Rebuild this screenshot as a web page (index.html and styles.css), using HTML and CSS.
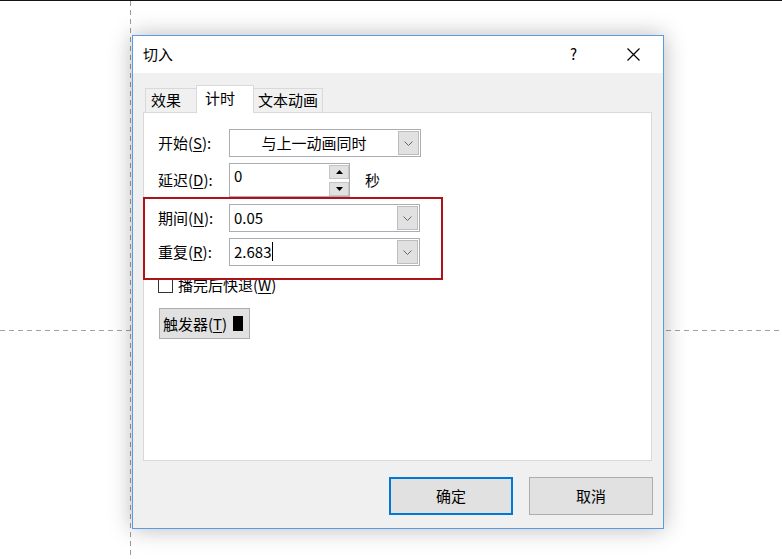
FILE: index.html
```html
<!DOCTYPE html>
<html lang="zh-CN">
<head>
    <meta charset="UTF-8">
    <title>切入</title>
    <link rel="stylesheet" href="styles.css">
</head>
<body>
    <div class="desk">
        <div class="guide-v"></div>
        <div class="guide-h"></div>

        <div class="dialog">
            <div class="titlebar">
                <span class="title">切入</span>
                <span class="help">?</span>
                <svg class="close" width="13" height="13" viewBox="0 0 13 13">
                    <path d="M0.5 0.5 L12.5 12.5 M12.5 0.5 L0.5 12.5" stroke="#000" stroke-width="1.2" fill="none"/>
                </svg>
            </div>

            <div class="content">
                <div class="tabs">
                    <div class="tab tab-first">效果</div>
                    <div class="tab active">计时</div>
                    <div class="tab">文本动画</div>
                </div>

                <div class="panel">
                    <div class="row row-start">
                        <span class="label">开始(<u>S</u>):</span>
                        <div class="combo combo-wide">
                            <span class="combo-text center">与上一动画同时</span>
                            <span class="drop"><svg width="9" height="5" viewBox="0 0 9 5"><path d="M0.5 0.5 L4.5 4.5 L8.5 0.5" stroke="#666" fill="none"/></svg></span>
                        </div>
                    </div>

                    <div class="row row-delay">
                        <span class="label">延迟(<u>D</u>):</span>
                        <div class="spinbox">
                            <span class="spin-text">0</span>
                            <div class="spins">
                                <span class="spin spin-up"><svg width="7" height="4" viewBox="0 0 7 4"><path d="M3.5 0 L7 4 L0 4 Z" fill="#000"/></svg></span>
                                <span class="spin spin-down"><svg width="7" height="4" viewBox="0 0 7 4"><path d="M0 0 L7 0 L3.5 4 Z" fill="#000"/></svg></span>
                            </div>
                        </div>
                        <span class="unit">秒</span>
                    </div>

                    <div class="row row-period">
                        <span class="label">期间(<u>N</u>):</span>
                        <div class="combo">
                            <span class="combo-text">0.05</span>
                            <span class="drop"><svg width="9" height="5" viewBox="0 0 9 5"><path d="M0.5 0.5 L4.5 4.5 L8.5 0.5" stroke="#666" fill="none"/></svg></span>
                        </div>
                    </div>

                    <div class="row row-repeat">
                        <span class="label">重复(<u>R</u>):</span>
                        <div class="combo">
                            <span class="combo-text">2.683<span class="caret"></span></span>
                            <span class="drop"><svg width="9" height="5" viewBox="0 0 9 5"><path d="M0.5 0.5 L4.5 4.5 L8.5 0.5" stroke="#666" fill="none"/></svg></span>
                        </div>
                    </div>

                    <div class="check-row">
                        <span class="checkbox"></span>
                        <span class="check-label">播完后快退(<u>W</u>)</span>
                    </div>

                    <div class="trigger">触发器(<u>T</u>)<span class="swatch"></span></div>
                </div>

                <div class="actions">
                    <div class="btn btn-default">确定</div>
                    <div class="btn">取消</div>
                </div>
            </div>

            <div class="highlight"></div>
        </div>
    </div>
</body>
</html>
```

FILE: styles.css
```css
body {
    margin: 0;
    background-color: #fff;
    font-family: "Noto Sans CJK SC", "Noto Sans", sans-serif;
    font-size: 15px;
    color: #000;
}

u {
    text-decoration: underline;
    text-underline-offset: 2px;
}

.desk {
    position: relative;
    width: 782px;
    height: 559px;
    overflow: hidden;
    border-top: 1px solid #141414;
    box-sizing: border-box;
}

.guide-v {
    position: absolute;
    left: 130px;
    top: 0;
    width: 1px;
    height: 559px;
    background: repeating-linear-gradient(to bottom, #9a9a9a 0 5px, transparent 5px 9px);
}

.guide-h {
    position: absolute;
    left: 0;
    top: 329px;
    width: 782px;
    height: 1px;
    background: repeating-linear-gradient(to right, #a0a0a0 0 5px, transparent 5px 9px);
}

.dialog {
    position: absolute;
    left: 132px;
    top: 34px;
    width: 530px;
    height: 492px;
    border: 1px solid #5b9be6;
    background-color: #f0f0f0;
    box-shadow: 0 0 22px rgba(0, 0, 0, 0.28);
    display: flex;
    flex-direction: column;
}

.titlebar {
    height: 37px;
    background-color: #fff;
    display: flex;
    align-items: center;
    padding-left: 10px;
}

.title {
    flex: 1;
    padding-bottom: 2px;
}

.help {
    width: 10px;
    margin-right: 47px;
    font-size: 15px;
    padding-bottom: 2px;
}

.close {
    margin-right: 23px;
}

.content {
    padding: 12px 11px 0 10px;
    display: flex;
    flex-direction: column;
}

.tabs {
    display: flex;
    align-items: flex-end;
    height: 27px;
    padding-left: 2px;
}

.tab {
    height: 24px;
    line-height: 21px;
    border: 1px solid #d9d9d9;
    border-bottom: none;
    padding: 0 4px;
    margin-left: -1px;
    box-sizing: border-box;
}

.tab-first {
    margin-left: 0;
    width: 52px;
    padding-left: 5px;
}

.tab.active {
    height: 28px;
    margin-bottom: -1px;
    background-color: #fff;
    width: 58px;
    padding-left: 8px;
    line-height: 24px;
    position: relative;
    z-index: 1;
}

.panel {
    background-color: #fff;
    border: 1px solid #d9d9d9;
    padding: 16px 0 0 14px;
    box-sizing: border-box;
    height: 349px;
}

.row {
    display: flex;
    align-items: center;
}

.label {
    width: 71px;
    padding-bottom: 2px;
}

.combo {
    width: 191px;
    height: 28px;
    border: 1px solid #abadb3;
    box-sizing: border-box;
    display: flex;
    align-items: center;
    background-color: #fff;
}

.combo-wide {
    width: 192px;
}

.combo-text {
    flex: 1;
    padding: 0 0 2px 4px;
    display: flex;
    align-items: center;
}

.combo-text.center {
    justify-content: center;
    padding-left: 0;
}

.caret {
    display: inline-block;
    width: 1px;
    height: 19px;
    background-color: #000;
    margin-left: 1px;
}

.drop {
    width: 21px;
    height: 24px;
    margin-right: 1px;
    background-color: #e1e1e1;
    border: 1px solid #bdbdbd;
    box-sizing: border-box;
    display: flex;
    align-items: center;
    justify-content: center;
}

.row-delay {
    margin-top: 6px;
}

.spinbox {
    width: 121px;
    height: 34px;
    border: 1px solid #abadb3;
    box-sizing: border-box;
    display: flex;
    background-color: #fff;
}

.spin-text {
    flex: 1;
    padding: 1px 0 0 4px;
    line-height: 22px;
}

.spins {
    display: flex;
    flex-direction: column;
    gap: 3px;
    padding-top: 1px;
}

.spin {
    width: 20px;
    height: 14px;
    background-color: #e1e1e1;
    border: 1px solid #c4c4c4;
    box-sizing: border-box;
    display: flex;
    align-items: center;
    justify-content: center;
}

.spin-down {
    height: 15px;
}

.unit {
    margin-left: 15px;
    padding-bottom: 1px;
}

.row-period {
    margin-top: 7px;
}

.row-repeat {
    margin-top: 6px;
}

.check-row {
    display: flex;
    align-items: center;
    margin-top: 9px;
    height: 20px;
}

.checkbox {
    width: 15px;
    height: 15px;
    border: 1px solid #333;
    box-sizing: border-box;
    background-color: #fff;
    margin-right: 5px;
}

.check-label {
    padding-bottom: 2px;
}

.trigger {
    margin-top: 13px;
    margin-left: 1px;
    width: 91px;
    height: 31px;
    box-sizing: border-box;
    background-color: #e1e1e1;
    border: 1px solid #adadad;
    display: flex;
    align-items: center;
    padding: 0 0 1px 3px;
}

.swatch {
    width: 10px;
    height: 15px;
    background-color: #000;
    margin-left: 6px;
}

.actions {
    display: flex;
    justify-content: flex-end;
    gap: 16px;
    margin-top: 16px;
    margin-right: -1px;
}

.btn {
    width: 124px;
    height: 38px;
    box-sizing: border-box;
    background-color: #e1e1e1;
    border: 1px solid #adadad;
    display: flex;
    align-items: center;
    justify-content: center;
    padding-bottom: 2px;
}

.btn-default {
    border: 2px solid #0078d7;
}

.highlight {
    position: absolute;
    left: 10px;
    top: 161px;
    width: 296px;
    height: 79px;
    border: 2px solid #ae1319;
}
```
